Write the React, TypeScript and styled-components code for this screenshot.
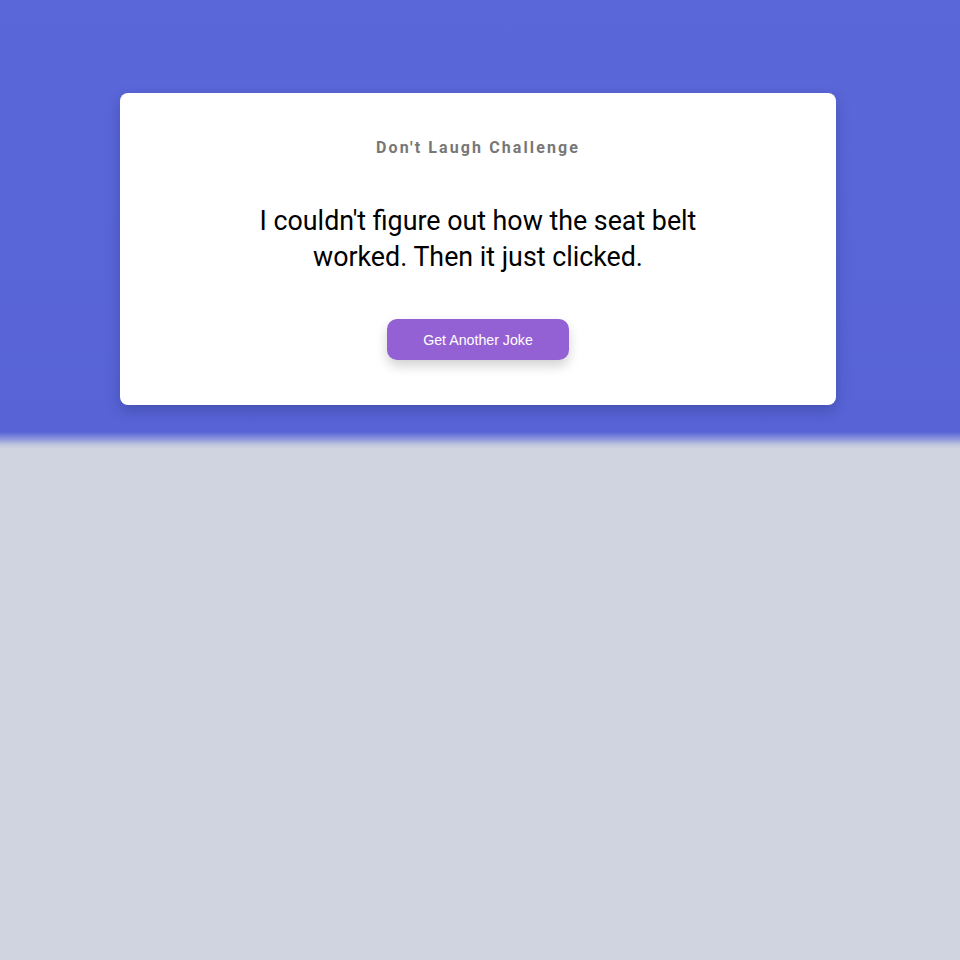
import React, { useState } from 'react';
import styled, { createGlobalStyle } from 'styled-components';

const GlobalStyle = createGlobalStyle`
    html, body {
        margin: 0;
        padding: 0;
        background: #cfd4e0;
        font-family: Roboto, "Liberation Sans", sans-serif;
    }
`;

const Page = styled.div`
    min-height: 960px;
    background: #cfd4e0;
`;

// blurred lower edge of the header band
const Hero = styled.div`
    height: 450px;
    padding: 93px 4px 0 0;
    box-sizing: border-box;
    background: linear-gradient(
        to bottom,
        #5a67d8 0,
        #5864d6 432px,
        #8d96dc 439px,
        #c2c8df 445px,
        #cfd4e0 449px
    );
`;

const Card = styled.div`
    background: #ffffff;
    width: 716px;
    margin: 0 auto;
    box-sizing: border-box;
    border-radius: 8px;
    padding: 43px 40px 45px;
    display: flex;
    flex-direction: column;
    align-items: center;
    box-shadow: 0 6px 14px rgba(20, 25, 80, 0.25);
`;

const Title = styled.h3`
    margin: 0;
    font-size: 16px;
    line-height: 24px;
    font-weight: 700;
    letter-spacing: 2.1px;
    color: #777777;
`;

const Joke = styled.p`
    margin: 43px 0 44px;
    max-width: 470px;
    text-align: center;
    font-size: 26.8px;
    line-height: 36px;
    font-weight: 400;
    color: #000000;
`;

const JokeButton = styled.button`
    width: 182px;
    height: 41px;
    border: none;
    border-radius: 10px;
    background: #9461d5;
    color: #ffffff;
    font-family: "Liberation Sans", Arial, sans-serif;
    font-size: 14.2px;
    cursor: pointer;
    box-shadow: 0 6px 12px rgba(0, 0, 0, 0.18);
`;

const jokes = [
    "I couldn't figure out how the seat belt worked. Then it just clicked.",
    "I'm reading a book about anti-gravity. It's impossible to put down.",
    "Why don't skeletons fight each other? They don't have the guts.",
];

export default function App() {
    const [index, setIndex] = useState(0);
    const nextJoke = () => setIndex((index + 1) % jokes.length);

    return (
        <Page>
            <GlobalStyle />
            <Hero>
                <Card>
                    <Title>Don't Laugh Challenge</Title>
                    <Joke>{jokes[index]}</Joke>
                    <JokeButton onClick={nextJoke}>Get Another Joke</JokeButton>
                </Card>
            </Hero>
        </Page>
    );
}
